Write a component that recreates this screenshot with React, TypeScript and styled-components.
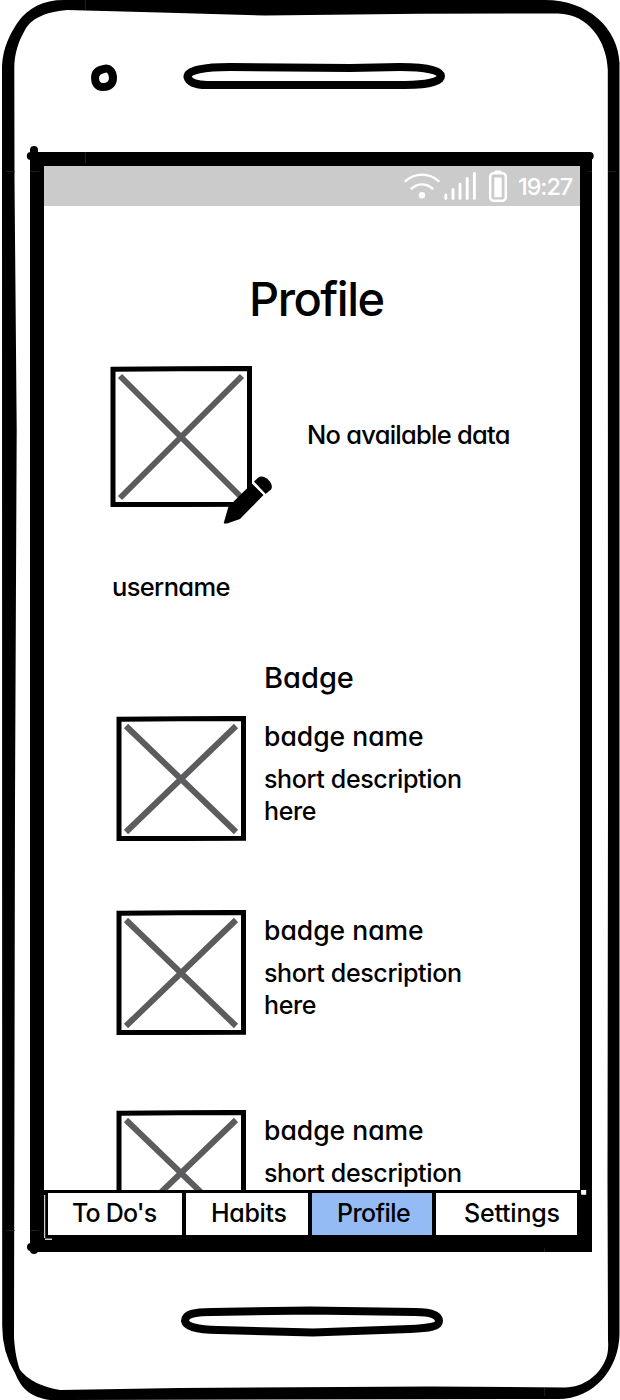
import React from "react";
import styled, { createGlobalStyle } from "styled-components";

const GlobalStyle = createGlobalStyle`
  *, *::before, *::after { box-sizing: border-box; }
  body {
    margin: 0;
    background: #fff;
    color: #000;
    font-family: Inter, "Liberation Sans", sans-serif;
    font-feature-settings: "cv11" 1, "calt" 0;
  }
`;

const Device = styled.div`
  position: relative;
  width: 620px;
  height: 1400px;
  padding: 166px 40px 0 44px;
  overflow: hidden;
`;

const DeviceArt = styled.svg`
  position: absolute;
  inset: 0;
  pointer-events: none;
`;

const Screen = styled.main`
  display: flex;
  flex-direction: column;
  width: 536px;
  height: 1072px;
`;

const StatusBar = styled.header`
  display: flex;
  flex: none;
  justify-content: flex-end;
  height: 40px;
  padding-right: 7px;
  background: #cbcbcb;
`;

const StatusIcons = styled.svg`
  flex: none;
  width: 110px;
  height: 40px;
`;

const Content = styled.section`
  flex: 1;
  min-height: 0;
  overflow: hidden;
`;

const Label = styled.span<{ $size: number; $spacing?: number; $line?: number }>`
  display: block;
  margin: 0;
  white-space: pre-line;
  font-weight: 500;
  font-size: ${(p) => p.$size}px;
  line-height: ${(p) => p.$line ?? 32}px;
  letter-spacing: ${(p) => p.$spacing ?? 0}px;
`;

const Clock = styled(Label)`
  width: 63px;
  padding-left: 8px;
  color: #fff;
  white-space: nowrap;
`;

const Title = styled(Label)`
  padding: 63px 0 0 205px;
`;

const Summary = styled.div`
  display: flex;
  margin-top: 37px;
  padding-left: 66px;
  height: 160px;
`;

const Avatar = styled.div`
  position: relative;
  width: 197px;
`;

const EditPencil = styled.svg`
  position: absolute;
  left: 112px;
  top: 108px;
`;

const EmptyNote = styled.div`
  padding-top: 53px;
`;

const Username = styled(Label)`
  padding: 45px 0 0 68px;
`;

const SectionTitle = styled(Label)`
  padding: 59px 0 0 220px;
`;

const BadgeList = styled.div`
  padding-top: 22px;
`;

const BadgeRow = styled.article<{ $height: number }>`
  display: flex;
  gap: 18px;
  height: ${(p) => p.$height}px;
  padding-left: 72px;
`;

const BadgeText = styled.div`
  display: flex;
  flex-direction: column;
  gap: 11px;
  padding-top: 4px;
`;

const TabBar = styled.nav`
  display: grid;
  flex: none;
  grid-template-columns: 134px 122px 120px 141px;
  gap: 4px;
  height: 48px;
  padding: 3px 3px 3px 4px;
  background: #000;
`;

const Tab = styled.a<{ $active?: boolean; $indent: number }>`
  padding: 4px 0 0 ${(p) => p.$indent}px;
  overflow: hidden;
  background: ${(p) => (p.$active ? "#94bbf3" : "#fff")};
`;

function Placeholder({ w, h }: { w: number; h: number }) {
  return (
    <svg width={w} height={h} viewBox={`0 0 ${w} ${h}`}>
      <path
        d={`M3 3.2 L${w * 0.5} 2.8 L${w - 2.5} 2.4 V${h - 2.8} L${w * 0.5} ${h - 2.6} L3 ${h - 2.4}Z`}
        fill="none"
        stroke="#000"
        strokeWidth="5"
      />
      <path
        d={`M10 10 L${w - 10} ${h - 9} M${w - 10} 10 L10 ${h - 9}`}
        stroke="#5c5c5e"
        strokeWidth="6"
      />
    </svg>
  );
}

function PhoneOutline() {
  return (
    <DeviceArt width="620" height="1400" viewBox="0 0 620 1400">
      <path
        fillRule="evenodd"
        d="M64 0 H545 C588 0 618 28 619.5 63 V1334 C619 1369 594 1399 558 1399 L65 1400 H50 C31 1397 22 1390 15 1373 Q2 1352 2.2 1325 L2 66 C3 47 10 34 18 22 C28 8 43 0 64 0Z
        M67 10 C44 12 31 19 25 30 C18 42 14 55 14.3 70 L14.5 180 L16.7 430 L15 800 L14 1338 C15 1352 17 1362 20 1370 C28 1380 42 1387 60 1390 L180 1388 L430 1386.5 L565 1387.5 C584 1387 598 1376 605 1361 Q609 1353 608 1340 L607.5 1180 L608 800 L607.8 70 C607 42 589 14 558 13.5 L420 13.8 L265 15.5 L160 12.4Z"
      />
      <path d="M30 156 V1244 L34 1252 H592 V158 L590 152 H34Z M44 166 V1238 L577.5 1236 V1190 H580 V166Z" fillRule="evenodd" />
      <path d="M34 150 V156 M30.8 156 H36 M586 156 H589.7 M31 1247 H36 M34 1244 V1250" fill="none" stroke="#000" strokeWidth="8" strokeLinecap="round" />
      <path d="M581 1190 h5.2 v4.7 h-5z" fill="#fff" />
      <path d="M45 1239.2 h7" stroke="#fff" strokeWidth="1.2" />
      <path d="M44.7 1195 V1238" stroke="#fff" strokeWidth="1" />
      <path d="M85.5 0 V10 M85.5 152 V163 M6 171.5 H15 M30 171.5 H39 M588 171.5 H592 M608 171.5 H616 M6 1230.5 H15 M30 1230.5 H39 M544.5 1248 V1252 M544.5 1388 V1396" stroke="#303030" strokeWidth=".6" />
      <path fill="none" stroke="#000" strokeWidth="8" d="M104 69 C109 67 113 72 113 78 C113 84 109 87 103 87 C97 87 95 83 95 78 C95 73 98 70 104 69Z" />
      <path fill="none" stroke="#000" strokeWidth="8" d="M187.5 77 C187 70 205 67 230 67 L350 68 L400 67 C425 67 441 70 441 76 C441 82 425 85 405 85 H207 C195 85 189 82 187.5 77Z" />
      <path fill="none" stroke="#000" strokeWidth="8" d="M185 1321 C185 1314 194 1312 212 1312 L310 1310.5 L415 1312 C431 1312 439 1315 439 1321 C439 1327 429 1328 410 1329 L313 1332.5 L218 1330 C196 1330 186 1326 185 1321Z" />
    </DeviceArt>
  );
}

function StatusGlyphs() {
  return (
    <StatusIcons viewBox="400 166 110 40" fill="none" stroke="#fff" strokeLinecap="round">
      <path strokeWidth="2.4" d="M405.5 181 C415 172.5 429 172.5 438.5 181 M411.5 188.5 C418 183 426 183 432.5 188.5" />
      <circle cx="422" cy="195.3" r="3.2" fill="#fff" stroke="none" />
      <path strokeWidth="2.9" d="M445.8 195 V198.6 M453 189.5 V198.6 M460 184.3 V198.6 M467.2 178.5 V198.6 M474.4 173.5 V198.6" />
      <rect x="490.2" y="173.2" width="15.6" height="27.6" rx="3.5" strokeWidth="2.5" />
      <path strokeWidth="2" d="M495.5 171.5 H500.5" />
      <path d="M494.3 177.5 h7.4 v19.7 h-7.4z" fill="#fff" stroke="none" />
    </StatusIcons>
  );
}

const badges = [
  { height: 194, name: "badge name", description: "short description\nhere" },
  { height: 200, name: "badge name", description: "short description\nhere" },
  { height: 80, name: "badge name", description: "short description" },
];

const tabs = [
  { label: "To Do's", indent: 24, spacing: -0.8 },
  { label: "Habits", indent: 25, spacing: -0.3 },
  { label: "Profile", indent: 25, spacing: -0.6, active: true },
  { label: "Settings", indent: 28, spacing: -0.2 },
];

export default function App() {
  return (
    <Device>
      <GlobalStyle />
      <Screen>
        <StatusBar>
          <StatusGlyphs />
          <Clock as="time" $size={23.5} $spacing={-1.1} $line={42}>19:27</Clock>
        </StatusBar>
        <Content>
          <Title as="h1" $size={47} $line={60} $spacing={-1.5}>Profile</Title>
          <Summary>
            <Avatar>
              <Placeholder w={142} h={141} />
              <EditPencil width="52" height="54" viewBox="222 474 52 54">
                <path d="M224 522 Q223 524 227 523.5 L240 519 L263.5 495 L252 483.5 L228.5 506.5Z" />
                <path d="M254 481.5 L258 477.8 C264 473 275 484 271 489.5 L265.5 494Z" />
                <path d="M252.8 482.5 L264.8 494.5" stroke="#fff" strokeWidth="1.8" />
              </EditPencil>
            </Avatar>
            <EmptyNote>
              <Label $size={25.5} $spacing={-0.75}>No available data</Label>
            </EmptyNote>
          </Summary>
          <Username $size={25.5} $spacing={-0.65}>username</Username>
          <SectionTitle as="h2" $size={29}>Badge</SectionTitle>
          <BadgeList>
            {badges.map((badge, i) => (
              <BadgeRow key={i} $height={badge.height}>
                <Placeholder w={130} h={125} />
                <BadgeText>
                  <Label as="h3" $size={26.5}>{badge.name}</Label>
                  <Label $size={25} $spacing={-0.35}>{badge.description}</Label>
                </BadgeText>
              </BadgeRow>
            ))}
          </BadgeList>
        </Content>
        <TabBar>
          {tabs.map((tab) => (
            <Tab key={tab.label} $indent={tab.indent} $active={tab.active}>
              <Label $size={25} $spacing={tab.spacing}>{tab.label}</Label>
            </Tab>
          ))}
        </TabBar>
      </Screen>
      <PhoneOutline />
    </Device>
  );
}
